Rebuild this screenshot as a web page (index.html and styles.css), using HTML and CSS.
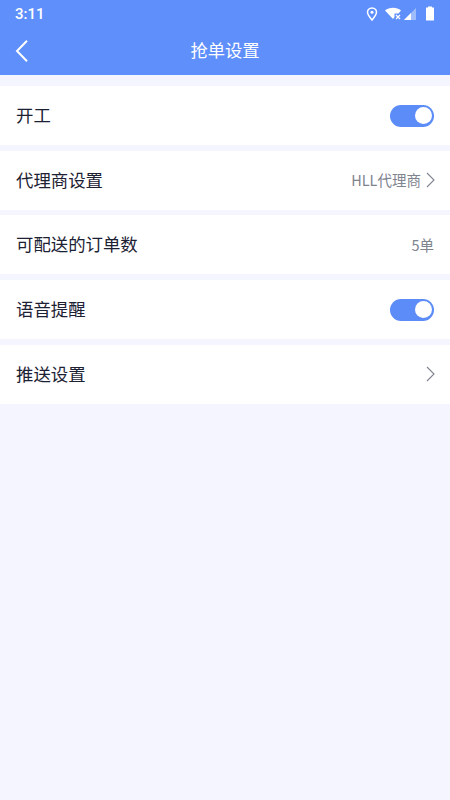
FILE: index.html
```html
<!DOCTYPE html>
<html lang="zh">
<head>
<meta charset="utf-8">
<title>抢单设置</title>
<link rel="stylesheet" href="styles.css">
</head>
<body>
<div class="top">
  <div class="status">
    <span class="time">3:11</span>
    <div class="status-icons">
      <svg class="i-loc" width="12" height="14" viewBox="0 0 12 14"><path d="M6 1C3.2 1 1.5 3 1.5 5.3 1.5 8 4.500 11 6 13c1.500-2 4.500-5 4.500-7.700C10.500 3 8.800 1 6 1z" fill="none" stroke="#fff" stroke-width="1.500"/><circle cx="6" cy="5.300" r="1.500" fill="#fff"/></svg>
      <svg class="i-wifi" width="17" height="14" viewBox="0 0 17 14"><path d="M0 3.500C2 1.800 5 .8 8 .8s6 1 8 2.700l-2.500 3H9.500V10L8 12z" fill="#fff"/><path d="M11 8l4 4M15 8l-4 4" stroke="#fff" stroke-width="1.300"/></svg>
      <svg class="i-sig" width="14" height="14" viewBox="0 0 14 14"><path d="M13 1v12H1z" fill="#fff" fill-opacity=".4"/><path d="M8 6v7H1z" fill="#fff"/></svg>
      <svg class="i-bat" width="10" height="15" viewBox="0 0 10 15"><path d="M3 1.500V.5h4v1h2v13H1v-13z" fill="#fff"/></svg>
    </div>
  </div>
  <div class="nav">
    <svg class="back" width="14" height="22" viewBox="0 0 14 22"><path d="M12 .8 2 11l10 10.200" fill="none" stroke="#fff" stroke-width="2"/></svg>
    <span class="title">抢单设置</span>
  </div>
</div>
<main class="list">
  <div class="row"><span class="label">开工</span><span class="switch"><span class="knob"></span></span></div>
  <div class="row"><span class="label">代理商设置</span><span class="value">HLL代理商<svg class="chev" width="9" height="16" viewBox="0 0 9 16"><path d="M1 1l7 7-7 7" fill="none" stroke="#80848f" stroke-width="1.100"/></svg></span></div>
  <div class="row"><span class="label">可配送的订单数</span><span class="value">5单</span></div>
  <div class="row"><span class="label">语音提醒</span><span class="switch"><span class="knob"></span></span></div>
  <div class="row"><span class="label">推送设置</span><span class="value"><svg class="chev" width="9" height="16" viewBox="0 0 9 16"><path d="M1 1l7 7-7 7" fill="none" stroke="#80848f" stroke-width="1.100"/></svg></span></div>
</main>
</body>
</html>
```
FILE: styles.css
```css
html, body { margin: 0; padding: 0; }
body {
  width: 450px;
  height: 800px;
  overflow: hidden;
  background: #f4f5fe;
  font-family: "Noto Sans CJK SC", "Noto Sans", sans-serif;
}
.top { background: #5f8ffb; color: #fff; height: 75px; }
.status {
  height: 27px;
  display: flex;
  align-items: center;
  justify-content: space-between;
  padding: 0 15px 0 15px;
}
.time { font-family: Roboto, sans-serif; font-size: 15px; font-weight: 500; color: #fff; }
.status-icons { display: flex; align-items: center; }
.status-icons svg { display: block; }
.i-wifi { margin-left: 7px; }
.i-sig { margin-left: 1px; }
.i-bat { margin-left: 8px; }
.nav {
  height: 48px;
  display: flex;
  align-items: flex-start;
  justify-content: center;
  position: relative;
}
.back { position: absolute; left: 15px; top: 13px; }
.title { font-size: 17.300px; line-height: 48px; margin-top: -1px; color: #fff; }
.list { padding-top: 11px; display: flex; flex-direction: column; gap: 5.700px; }
.row {
  height: 59px;
  background: #fff;
  display: flex;
  align-items: center;
  justify-content: space-between;
  padding: 0 16px;
}
.label { font-size: 17.400px; color: #1c2233; line-height: 24px; margin-top: -1px; }
.value { font-size: 14.500px; color: #80848f; display: flex; align-items: center; gap: 5px; line-height: 20px; }
.chev { margin-right: -1px; }
.switch {
  width: 44px;
  height: 22px;
  border-radius: 11px;
  background: #5b8cf8;
  display: flex;
  align-items: center;
  justify-content: flex-end;
  padding-right: 2px;
  box-sizing: border-box;
}
.knob { width: 17px; height: 17px; border-radius: 50%; background: #fff; }
```
